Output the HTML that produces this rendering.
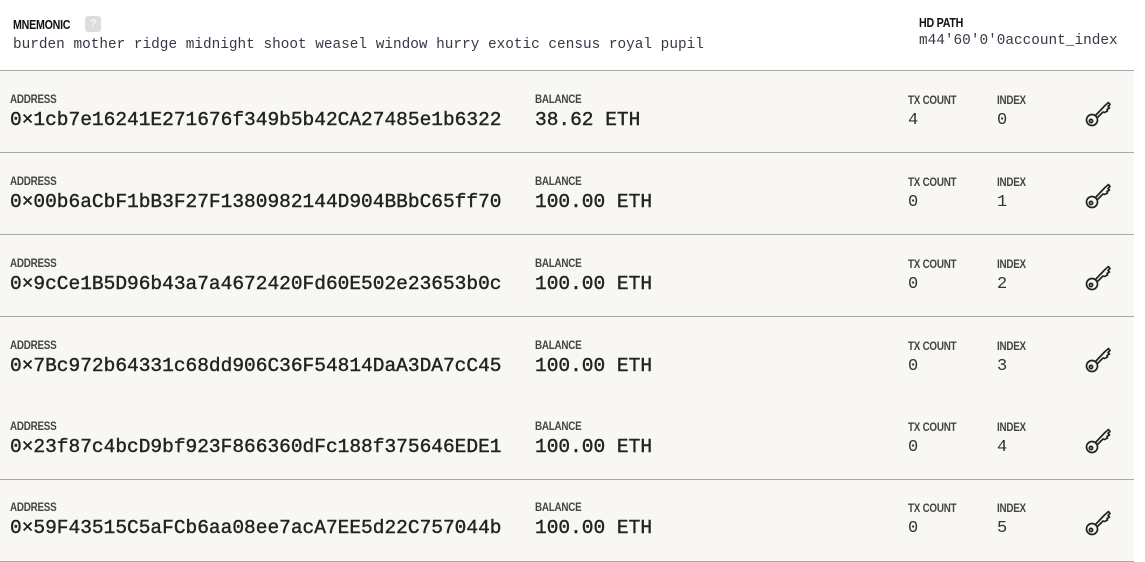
<!DOCTYPE html>
<html><head><style>
*{margin:0;padding:0;box-sizing:border-box}
body{width:1145px;height:562px;background:#fff;font-family:"Liberation Sans",sans-serif;position:relative;overflow:hidden}
.lbl{position:absolute;font-family:"Liberation Sans",sans-serif;font-size:12px;font-weight:bold;color:#444;letter-spacing:-0.3px;transform:scaleX(0.82);transform-origin:left}
.mono{position:absolute;font-family:"Liberation Mono",monospace;color:#333a45}
.row{position:absolute;left:0;width:1134px;height:82px;background:#f8f7f3;border-bottom:1px solid #a8a8a8}
.addr{font-size:19.5px;top:38px;left:10px;color:#222;-webkit-text-stroke:0.4px #222}
.big{font-size:19.5px;top:38px;color:#222;-webkit-text-stroke:0.4px #222}
.sm{font-size:17px;top:40px;color:#333}
svg{position:absolute;left:1083px;top:28px}
</style></head><body>
<div class="lbl" style="left:13px;top:17px;font-size:13px;color:#111">MNEMONIC</div>
<div style="position:absolute;left:85px;top:16px;width:16px;height:16px;background:#ddd;border-radius:3px;color:#fff;font-size:11px;text-align:center;line-height:16px">?</div>
<div class="mono" style="left:13px;top:37px;font-size:14.4px">burden mother ridge midnight shoot weasel window hurry exotic census royal pupil</div>
<div class="lbl" style="left:919px;top:15px;font-size:13px;color:#111">HD PATH</div>
<div class="mono" style="left:919px;top:33px;font-size:14.4px">m44'60'0'0account_index</div>
<div style="position:absolute;left:0;top:70px;width:1134px;height:1px;background:#a8a8a8"></div>

<div class="row" style="top:71px">
<div class="lbl" style="left:10px;top:21px">ADDRESS</div><div class="mono addr">0×1cb7e16241E271676f349b5b42CA27485e1b6322</div>
<div class="lbl" style="left:535px;top:21px">BALANCE</div><div class="mono big" style="left:535px">38.62 ETH</div>
<div class="lbl" style="left:908px;top:22px">TX COUNT</div><div class="mono sm" style="left:908px">4</div>
<div class="lbl" style="left:997px;top:22px">INDEX</div><div class="mono sm" style="left:997px">0</div>
<svg width="30" height="30" viewBox="0 0 30 30" fill="none" stroke="#222" stroke-width="1.7" stroke-linejoin="round"><circle cx="9" cy="21" r="5.5"/><circle cx="8" cy="22" r="1.6"/><path d="M12.5 16.5 L22 6.5 L25.5 3.5 L27 5.5 L25 7.5 L26.5 9 L24 10.5 L24.5 12 L21.5 13.5 L20 13 L14.5 18.5"/></svg>
</div>
<div class="row" style="top:153px">
<div class="lbl" style="left:10px;top:21px">ADDRESS</div><div class="mono addr">0×00b6aCbF1bB3F27F1380982144D904BBbC65ff70</div>
<div class="lbl" style="left:535px;top:21px">BALANCE</div><div class="mono big" style="left:535px">100.00 ETH</div>
<div class="lbl" style="left:908px;top:22px">TX COUNT</div><div class="mono sm" style="left:908px">0</div>
<div class="lbl" style="left:997px;top:22px">INDEX</div><div class="mono sm" style="left:997px">1</div>
<svg width="30" height="30" viewBox="0 0 30 30" fill="none" stroke="#222" stroke-width="1.7" stroke-linejoin="round"><circle cx="9" cy="21" r="5.5"/><circle cx="8" cy="22" r="1.6"/><path d="M12.5 16.5 L22 6.5 L25.5 3.5 L27 5.5 L25 7.5 L26.5 9 L24 10.5 L24.5 12 L21.5 13.5 L20 13 L14.5 18.5"/></svg>
</div>
<div class="row" style="top:235px">
<div class="lbl" style="left:10px;top:21px">ADDRESS</div><div class="mono addr">0×9cCe1B5D96b43a7a4672420Fd60E502e23653b0c</div>
<div class="lbl" style="left:535px;top:21px">BALANCE</div><div class="mono big" style="left:535px">100.00 ETH</div>
<div class="lbl" style="left:908px;top:22px">TX COUNT</div><div class="mono sm" style="left:908px">0</div>
<div class="lbl" style="left:997px;top:22px">INDEX</div><div class="mono sm" style="left:997px">2</div>
<svg width="30" height="30" viewBox="0 0 30 30" fill="none" stroke="#222" stroke-width="1.7" stroke-linejoin="round"><circle cx="9" cy="21" r="5.5"/><circle cx="8" cy="22" r="1.6"/><path d="M12.5 16.5 L22 6.5 L25.5 3.5 L27 5.5 L25 7.5 L26.5 9 L24 10.5 L24.5 12 L21.5 13.5 L20 13 L14.5 18.5"/></svg>
</div>
<div class="row" style="top:317px">
<div class="lbl" style="left:10px;top:21px">ADDRESS</div><div class="mono addr">0×7Bc972b64331c68dd906C36F54814DaA3DA7cC45</div>
<div class="lbl" style="left:535px;top:21px">BALANCE</div><div class="mono big" style="left:535px">100.00 ETH</div>
<div class="lbl" style="left:908px;top:22px">TX COUNT</div><div class="mono sm" style="left:908px">0</div>
<div class="lbl" style="left:997px;top:22px">INDEX</div><div class="mono sm" style="left:997px">3</div>
<svg width="30" height="30" viewBox="0 0 30 30" fill="none" stroke="#222" stroke-width="1.7" stroke-linejoin="round"><circle cx="9" cy="21" r="5.5"/><circle cx="8" cy="22" r="1.6"/><path d="M12.5 16.5 L22 6.5 L25.5 3.5 L27 5.5 L25 7.5 L26.5 9 L24 10.5 L24.5 12 L21.5 13.5 L20 13 L14.5 18.5"/></svg>
</div>
<div class="row" style="top:398px">
<div class="lbl" style="left:10px;top:21px">ADDRESS</div><div class="mono addr">0×23f87c4bcD9bf923F866360dFc188f375646EDE1</div>
<div class="lbl" style="left:535px;top:21px">BALANCE</div><div class="mono big" style="left:535px">100.00 ETH</div>
<div class="lbl" style="left:908px;top:22px">TX COUNT</div><div class="mono sm" style="left:908px">0</div>
<div class="lbl" style="left:997px;top:22px">INDEX</div><div class="mono sm" style="left:997px">4</div>
<svg width="30" height="30" viewBox="0 0 30 30" fill="none" stroke="#222" stroke-width="1.7" stroke-linejoin="round"><circle cx="9" cy="21" r="5.5"/><circle cx="8" cy="22" r="1.6"/><path d="M12.5 16.5 L22 6.5 L25.5 3.5 L27 5.5 L25 7.5 L26.5 9 L24 10.5 L24.5 12 L21.5 13.5 L20 13 L14.5 18.5"/></svg>
</div>
<div class="row" style="top:480px">
<div class="lbl" style="left:10px;top:20px">ADDRESS</div><div class="mono addr" style="top:37px">0×59F43515C5aFCb6aa08ee7acA7EE5d22C757044b</div>
<div class="lbl" style="left:535px;top:20px">BALANCE</div><div class="mono big" style="left:535px;top:37px">100.00 ETH</div>
<div class="lbl" style="left:908px;top:21px">TX COUNT</div><div class="mono sm" style="left:908px;top:39px">0</div>
<div class="lbl" style="left:997px;top:21px">INDEX</div><div class="mono sm" style="left:997px;top:39px">5</div>
<svg width="30" height="30" viewBox="0 0 30 30" fill="none" stroke="#222" stroke-width="1.7" stroke-linejoin="round"><circle cx="9" cy="21" r="5.5"/><circle cx="8" cy="22" r="1.6"/><path d="M12.5 16.5 L22 6.5 L25.5 3.5 L27 5.5 L25 7.5 L26.5 9 L24 10.5 L24.5 12 L21.5 13.5 L20 13 L14.5 18.5"/></svg>
</div>
</body></html>
